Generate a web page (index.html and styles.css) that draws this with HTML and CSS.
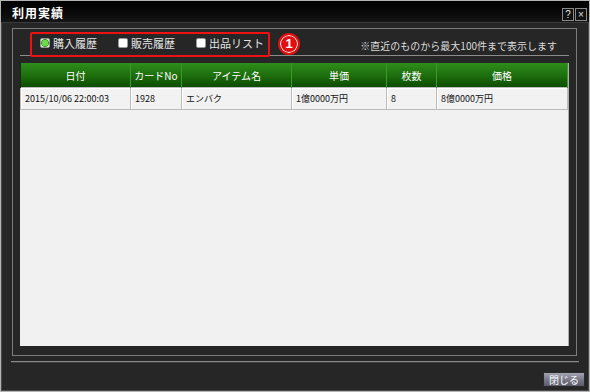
FILE: index.html
```html
<!DOCTYPE html>
<html lang="ja">
  <head>
    <meta charset="UTF-8" />
    <meta name="viewport" content="width=device-width, initial-scale=1.0" />
    <title>利用実績</title>
    <link rel="stylesheet" href="styles.css">
  </head>
  <body>
    <div class="window">
      <div class="titlebar">
        <span class="title">利用実績</span>
        <div class="title-buttons">
          <span class="tbtn">?</span>
          <span class="tbtn">×</span>
        </div>
      </div>

      <div class="panel">
        <div class="tabs">
          <label class="radio checked"><span class="dot"></span>購入履歴</label>
          <label class="radio"><span class="dot"></span>販売履歴</label>
          <label class="radio"><span class="dot"></span>出品リスト</label>
          <span class="note">※直近のものから最大100件まで表示します</span>
        </div>

        <div class="list">
          <table>
            <colgroup>
              <col style="width: 110px" />
              <col style="width: 51px" />
              <col style="width: 110px" />
              <col style="width: 95px" />
              <col style="width: 50px" />
              <col />
            </colgroup>
            <thead>
              <tr>
                <th>日付</th>
                <th>カードNo</th>
                <th>アイテム名</th>
                <th>単価</th>
                <th>枚数</th>
                <th>価格</th>
              </tr>
            </thead>
            <tbody>
              <tr>
                <td>2015/10/06 22:00:03</td>
                <td>1928</td>
                <td>エンバク</td>
                <td>1億0000万円</td>
                <td>8</td>
                <td>8億0000万円</td>
              </tr>
            </tbody>
          </table>
        </div>

        <!-- annotation -->
        <div class="mark-box"></div>
        <div class="mark-num">1</div>
      </div>

      <div class="separator"></div>

      <div class="footer">
        <button class="close">閉じる</button>
      </div>
    </div>
  </body>
</html>
```

FILE: styles.css
```css
body {
  margin: 0;
  background-color: #262626;
  font-family: "Noto Sans CJK JP", "Liberation Sans", sans-serif;
}
.window {
  width: 590px;
  height: 392px;
  box-sizing: border-box;
  border: 1px solid #b4b4b4;
  box-shadow: inset 0 0 0 1px #4a4a4a;
  background-color: #262626;
  display: flex;
  flex-direction: column;
}
.titlebar {
  height: 21px;
  background: linear-gradient(#000000, #0c0c0c 70%, #161616);
  display: flex;
  align-items: center;
  justify-content: space-between;
  padding: 0 2px 0 11px;
  border-bottom: 1px solid #3a3a3a;
}
.title {
  color: #ffffff;
  font-size: 12px;
  font-weight: bold;
  letter-spacing: 1px;
  margin-top: 2px;
}
.title-buttons {
  display: flex;
  gap: 1px;
  margin-top: 6px;
}
.tbtn {
  width: 10px;
  height: 11px;
  border: 1px solid #8a8a8a;
  background-color: #111;
  color: #e0e0e0;
  font-size: 10px;
  line-height: 11px;
  text-align: center;
  font-family: "Liberation Sans", sans-serif;
}
.panel {
  position: relative;
  margin: 5px 12px 0 11px;
  height: 326px;
  border: 1px solid #7c7c7c;
  padding: 0 7px 0 7px;
  display: flex;
  flex-direction: column;
}
.tabs {
  height: 26px;
  border-bottom: 1px solid #8c8c8c;
  display: flex;
  align-items: center;
  padding-left: 20px;
  color: #e4e4e4;
  font-size: 11px;
}
.radio {
  display: flex;
  align-items: center;
  gap: 3px;
  margin-right: 21px;
  margin-top: 1px;
}
.dot {
  width: 8px;
  height: 8px;
  border: 1px solid #9a9a9a;
  border-radius: 2px;
  background-color: #ffffff;
  box-sizing: content-box;
}
.radio.checked .dot {
  background: radial-gradient(circle, #6fd94a 0 3px, #2e8a1c 3.5px, #ffffff 4.5px);
}
.note {
  margin-left: auto;
  margin-right: 12px;
  margin-top: 6px;
  font-size: 10px;
  color: #dcdcdc;
}
.list {
  margin-top: 7px;
  height: 283px;
  background-color: #f1f1f1;
  border-right: 1px solid #b0b0b0;
  box-sizing: border-box;
}
table {
  width: 548px;
  border-collapse: collapse;
  table-layout: fixed;
}
th {
  height: 24px;
  padding: 0;
  background: linear-gradient(#2f8d1c, #1c6c0c 55%, #0c4c02);
  color: #ffffff;
  font-size: 10px;
  font-weight: normal;
  border-left: 1px solid #0a3602;
  border-right: 1px solid #3c9a28;
}
td {
  height: 21px;
  padding: 0 0 0 4px;
  font-size: 9px;
  color: #111111;
  background-color: #f2f2f2;
  border: 1px solid #bcbcbc;
  box-shadow: inset 1px 1px 0 #ffffff;
  white-space: nowrap;
  overflow: hidden;
}
.mark-box {
  position: absolute;
  left: 17px;
  top: 3px;
  width: 236px;
  height: 21px;
  border: 2px solid #ee1111;
  border-radius: 2px;
}
.mark-num {
  position: absolute;
  left: 265px;
  top: 4px;
  width: 22px;
  height: 22px;
  box-sizing: border-box;
  border-radius: 50%;
  background-color: #e01010;
  border: 2px solid #e01010;
  box-shadow: inset 0 0 0 1px #ffffff;
  color: #ffffff;
  font-family: "Liberation Sans", sans-serif;
  font-weight: bold;
  font-size: 13px;
  line-height: 18px;
  text-align: center;
}
.separator {
  margin: 5px 10px 0 10px;
  height: 1px;
  background-color: #8a8a8a;
  border-bottom: 1px solid #3c3c3c;
}
.footer {
  display: flex;
  justify-content: flex-end;
  padding: 9px 4px 0 0;
}
.close {
  width: 42px;
  height: 15px;
  padding: 0;
  border: 1px solid #2a2a2a;
  background: linear-gradient(#a2a2b0, #7a7a8a 50%, #5a5a68);
  color: #ffffff;
  font-family: "Noto Sans CJK JP", sans-serif;
  font-size: 10px;
  line-height: 13px;
}
```
